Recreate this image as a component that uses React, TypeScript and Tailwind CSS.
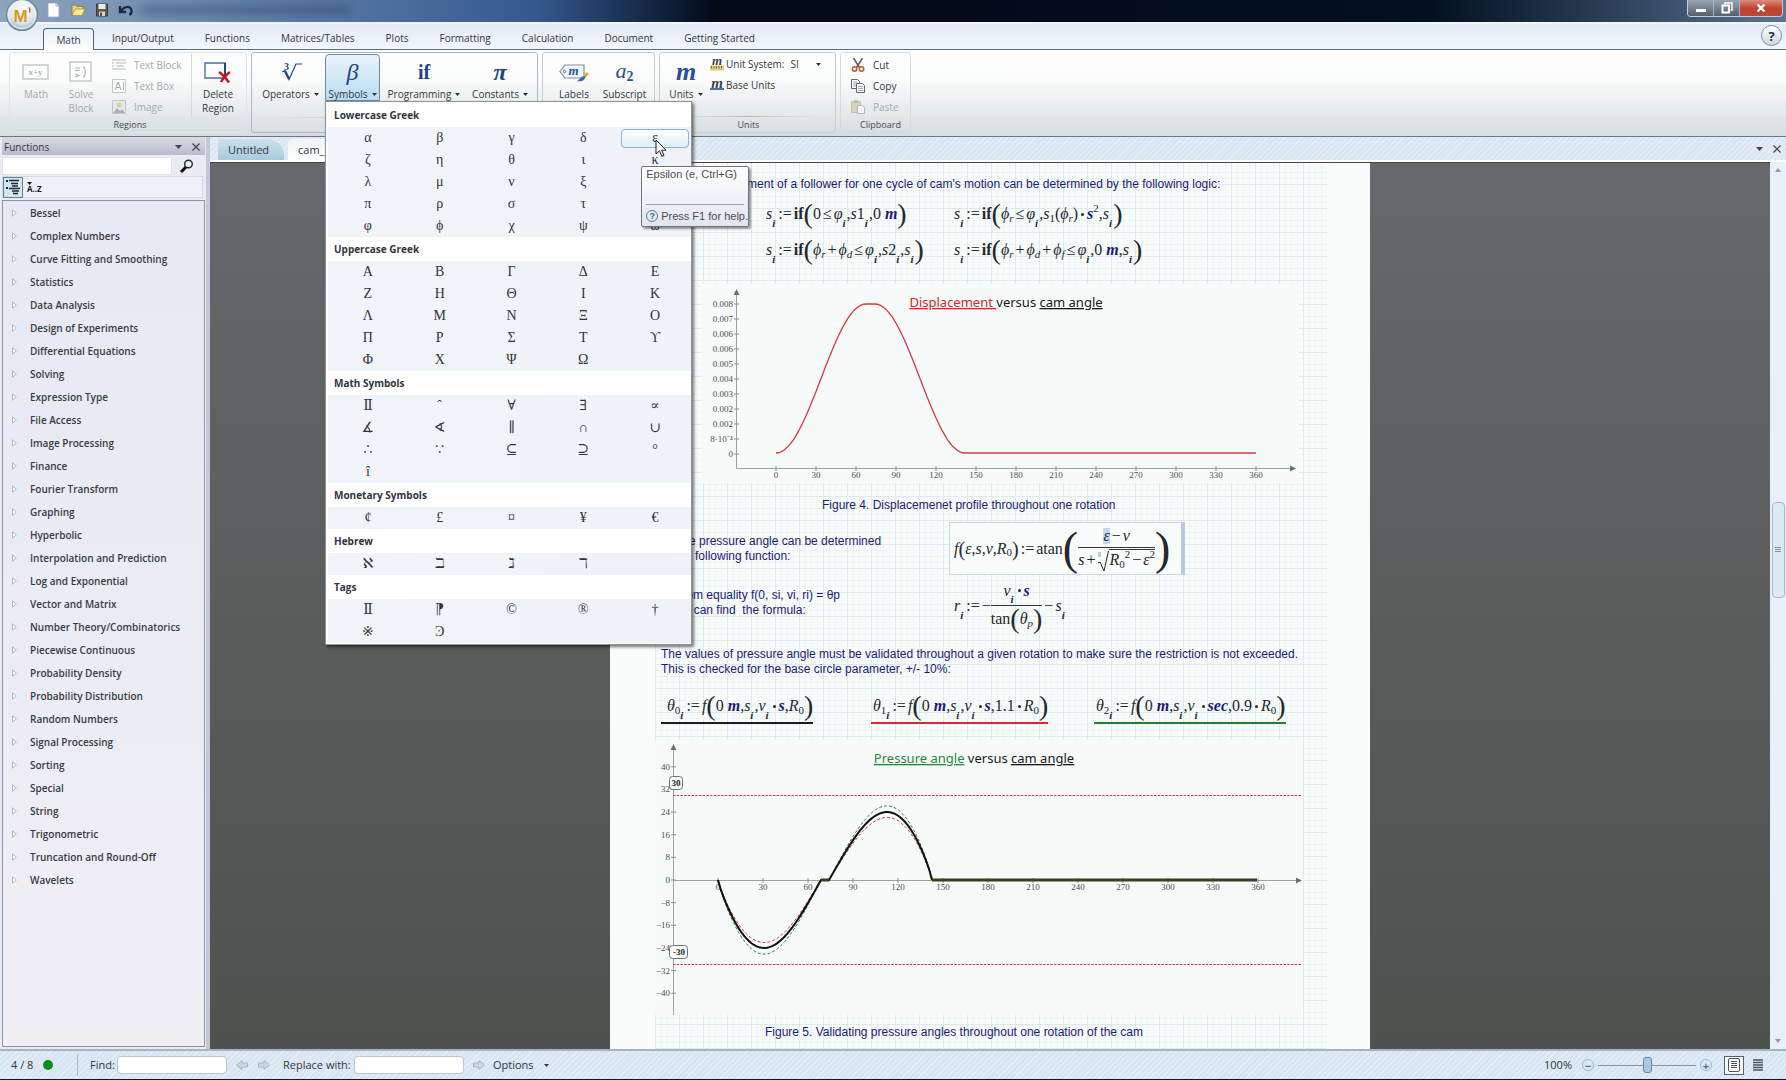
import * as React from "react"
import clsx from "clsx"

const tabs = ["Input/Output", "Functions", "Matrices/Tables", "Plots", "Formatting", "Calculation", "Document", "Getting Started"]

const categories = [
  "Bessel", "Complex Numbers", "Curve Fitting and Smoothing", "Statistics", "Data Analysis",
  "Design of Experiments", "Differential Equations", "Solving", "Expression Type", "File Access",
  "Image Processing", "Finance", "Fourier Transform", "Graphing", "Hyperbolic",
  "Interpolation and Prediction", "Log and Exponential", "Vector and Matrix",
  "Number Theory/Combinatorics", "Piecewise Continuous", "Probability Density",
  "Probability Distribution", "Random Numbers", "Signal Processing", "Sorting", "Special",
  "String", "Trigonometric", "Truncation and Round-Off", "Wavelets",
]

const symbolGroups = [
  { title: "Lowercase Greek", symbols: "α β γ δ ε ζ η θ ι κ λ μ ν ξ ο π ρ σ τ υ φ ϕ χ ψ ω".split(" ") },
  { title: "Uppercase Greek", symbols: "Α Β Γ Δ Ε Ζ Η Θ Ι Κ Λ Μ Ν Ξ Ο Π Ρ Σ Τ ϒ Φ Χ Ψ Ω".split(" ") },
  { title: "Math Symbols", symbols: "Ⅱ ˆ ∀ ∃ ∝ ∡ ∢ ∥ ∩ ∪ ∴ ∵ ⊆ ⊇ ° î".split(" ") },
  { title: "Monetary Symbols", symbols: "¢ £ ¤ ¥ €".split(" ") },
  { title: "Hebrew", symbols: "ℵ ℶ ℷ ℸ".split(" ") },
  { title: "Tags", symbols: "Ⅱ ⁋ © ® † ※ Ͽ".split(" ") },
]

export default function App() {
  return (
    <div className="flex h-screen flex-col overflow-hidden bg-[#dbe7f2] font-['Open_Sans',sans-serif] text-[10px] leading-[14px] text-[#33373d]">
      <TitleBar />
      <RibbonTabs />
      <Ribbon />
      <main className="flex min-h-0 flex-1">
        <FunctionsPanel />
        <DocumentArea />
      </main>
      <StatusBar />
    </div>
  )
}

function TitleBar() {
  return (
    <header className="relative flex h-[22px] shrink-0 items-start justify-between bg-[#020a18]">
      <div className="absolute inset-0 bg-linear-to-r from-[#8ea5bf] via-[#35598f] via-30% to-transparent to-40%" />
      <div className="absolute inset-y-0 right-0 w-1/2 bg-linear-to-r from-[#020a18] via-[#04101f] via-60% to-[#5b7593]" />
      <div className="relative flex items-center gap-2 pt-0.5 pl-[46px]">
        <button aria-label="New" className="size-4">
          <svg viewBox="0 0 16 16"><path d="M2 1h8l3 3v11H2z" fill="#fff" stroke="#9aa5b3" strokeWidth=".8" /><path d="M10 1v3h3" fill="#dde4ec" stroke="#9aa5b3" strokeWidth=".8" /></svg>
        </button>
        <button aria-label="Open" className="size-4">
          <svg viewBox="0 0 16 16"><path d="M2 13V3h4l1 1.500h6V7" fill="#e9d27a" stroke="#8a7430" strokeWidth=".8" /><path d="M2 13.500 5 7h10l-3 6.500z" fill="#f8ec9c" stroke="#a98f38" strokeWidth=".8" /></svg>
        </button>
        <button aria-label="Save" className="size-4">
          <svg viewBox="0 0 16 16"><path d="M2.500 2h11v12h-11z" fill="#5a5754" stroke="#3c3a3a" /><path d="M4.500 2h7v5h-7z" fill="#ecebe6" /><path d="M5 9.500h6V14H5z" fill="#d8d4c8" /><path d="M6 10.500h2V14H6z" fill="#4a4744" /></svg>
        </button>
        <button aria-label="Undo" className="size-4">
          <svg viewBox="0 0 16 16"><path d="M2 4v6h6" fill="none" stroke="#1c2a40" strokeWidth="2.400" /><path d="M2.500 9.500C6 4 12 3.500 13.500 8c.5 2-.5 4-2 5" fill="none" stroke="#1c2a40" strokeWidth="2.200" /></svg>
        </button>
      </div>
      <div className="absolute top-1.5 left-[140px] h-2 w-[210px] rounded-full bg-[#1f3354]/40 blur-[5px]" />
      <div className="relative mr-[3px] flex h-[17px] overflow-hidden rounded-b border border-t-0 border-[#c3ccd6]">
        <button aria-label="Minimize" className="flex w-[26px] items-center justify-center border-r border-[#aab4c0] bg-linear-to-b from-[#9aa5b1] to-[#56606d]">
          <span className="mt-1 h-[3px] w-2.5 bg-white" />
        </button>
        <button aria-label="Restore" className="flex w-[26px] items-center justify-center border-r border-[#aab4c0] bg-linear-to-b from-[#9aa5b1] to-[#56606d]">
          <svg className="size-3" viewBox="0 0 12 12"><path d="M4 2.500V1h7v7H9.500" fill="none" stroke="#fff" strokeWidth="1.500" /><path d="M1.500 3.500h6.500v7H1.500z" fill="none" stroke="#fff" strokeWidth="2" /></svg>
        </button>
        <button aria-label="Close" className="flex w-[42px] items-center justify-center bg-linear-to-b from-[#d98d80] via-[#c2412d] via-50% to-[#b84a37]">
          <svg className="size-2.5" viewBox="0 0 10 10"><path d="M1.500 1.500l7 7m0-7l-7 7" stroke="#fff" strokeWidth="2.400" /></svg>
        </button>
      </div>
      <button aria-label="Application menu" className="absolute -top-0.5 left-[5px] z-20 size-[34px]">
        <svg viewBox="0 0 34 34">
          <defs>
            <radialGradient id="orb" cx=".5" cy=".35" r=".7">
              <stop offset="0" stopColor="#fff" />
              <stop offset=".6" stopColor="#dbe6ef" />
              <stop offset="1" stopColor="#7f97ae" />
            </radialGradient>
          </defs>
          <circle cx="17" cy="17" r="15.500" fill="url(#orb)" stroke="#6d8296" strokeWidth="1.200" />
          <circle cx="17" cy="17" r="13.500" fill="none" stroke="#f5fafd" />
          <text x="15.500" y="24" textAnchor="middle" fontFamily="Liberation Sans" fontWeight="700" fontSize="17" fill="#dc9a1c">M</text>
          <path d="M24 9.500l1 2-.5 3" fill="none" stroke="#c8702a" strokeWidth="1.600" />
        </svg>
      </button>
    </header>
  )
}

function RibbonTabs() {
  return (
    <nav className="flex h-7 shrink-0 items-end justify-between border-t-2 border-b border-t-[#eef4fa] border-b-[#5f7180] bg-linear-to-b from-[#e3eaf2] to-[#f0f8ff] pl-[43px] shadow-[0_-1px_0_#50647c]">
      <div className="flex items-end">
        <a href="#math" className="-mb-px flex h-[22px] w-[51px] items-center justify-center rounded-t border border-b-0 border-[#4f6475] bg-linear-to-b from-[#e6f2f8] to-white">Math</a>
        <div className="flex h-[22px] items-center gap-[31px] pl-[18px]">
          {tabs.map((tab) => (
            <a key={tab} href="#ribbon" className="whitespace-nowrap">{tab}</a>
          ))}
        </div>
      </div>
      <button aria-label="Help" className="mr-1 mb-[3px] flex size-[21px] items-center justify-center rounded-full border border-[#7b8b99] bg-linear-to-b from-white to-[#ccd9e4] text-[13px] font-bold text-[#27313b]">?</button>
    </nav>
  )
}

function Ribbon() {
  return (
    <section className="relative z-10 flex h-[87px] shrink-0 gap-1 border-b border-[#66788a] bg-linear-to-b from-white via-[#fafbfb] via-35% to-[#d5dddf] pt-0.5 pb-[3px] pl-[9px]">
      <RibbonGroup title="Regions" className="w-[238px] border-[#dfe4e7] pl-1">
        <BigButton label="Math" className="w-11" muted icon={<MathRegionIcon />} />
        <BigButton label="Solve Block" className="w-[46px] px-1" muted icon={<SolveIcon />} />
        <div className="flex w-[88px] shrink-0 flex-col border-r border-[#d5dadd] pl-2 text-[#a5a9ac]">
          <SmallButton label="Text Block" icon={<TextBlockIcon />} />
          <SmallButton label="Text Box" icon={<TextBoxIcon />} />
          <SmallButton label="Image" icon={<ImageIcon />} />
        </div>
        <BigButton label="Delete Region" className="w-[52px] px-2" icon={<DeleteRegionIcon />} />
      </RibbonGroup>

      <RibbonGroup className="w-[287px] border-[#a9bac6] pl-1">
        <BigButton label="Operators" caret className="w-[69px]" icon={<RootIcon />} />
        <div className="relative self-start">
          <button className="flex h-[47px] w-[55px] flex-col items-center rounded-t-sm border border-[#6d8aa3] bg-linear-to-b from-[#e9f4fc] to-[#b9dcf3] pt-[3px]">
            <span className="flex h-[27px] items-center font-['Liberation_Serif',serif] text-2xl text-[#24428c] italic">β</span>
            <span className="mt-0.5 flex items-center gap-1">Symbols <Caret /></span>
          </button>
          <SymbolsMenu />
        </div>
        <BigButton label="Programming" caret className="w-[88px]" icon={<span className="font-['Liberation_Serif',serif] text-xl font-bold text-[#24428c]">if</span>} />
        <BigButton label="Constants" caret className="w-[64px]" icon={<span className="font-['Liberation_Serif',serif] text-2xl font-bold text-[#24428c] italic">π</span>} />
      </RibbonGroup>

      <RibbonGroup className="w-[113px] border-[#c3ced6] pl-1.5">
        <BigButton label="Labels" className="w-[50px]" icon={<LabelIcon />} />
        <BigButton label="Subscript" className="w-[51px]" icon={<span className="font-['Liberation_Serif',serif] text-[22px] text-[#2c4f9c] italic">a<sub className="text-sm font-bold not-italic">2</sub></span>} />
      </RibbonGroup>

      <RibbonGroup title="Units" className="w-[177px] border-[#c3ced6] pl-0.5">
        <BigButton label="Units" caret className="w-12" icon={<span className="font-['Liberation_Serif',serif] text-[26px] font-bold text-[#2c4f9c] italic">m</span>} />
        <div className="flex flex-col">
          <label className="flex h-5 items-center gap-0.5">
            <RulerIcon />
            Unit System:
            <select className="ml-1 w-6 appearance-none outline-none" defaultValue="SI">
              <option>SI</option>
            </select>
            <Caret />
          </label>
          <SmallButton label="Base Units" tight icon={<span className="w-3.5 border-b-2 border-[#54709f] text-center font-['Liberation_Serif',serif] text-[15px] leading-[9px] font-bold text-[#3a4250] italic">m</span>} />
        </div>
      </RibbonGroup>

      <RibbonGroup title="Clipboard" className="w-[71px] border-[#d3dbe0] pl-2.5">
        <div className="flex flex-col">
          <SmallButton label="Cut" icon={<CutIcon />} />
          <SmallButton label="Copy" icon={<CopyIcon />} />
          <SmallButton label="Paste" muted icon={<PasteIcon />} />
        </div>
      </RibbonGroup>
    </section>
  )
}

function RibbonGroup({ title, className, children }: { title?: string; className: string; children: React.ReactNode }) {
  return (
    <div className={clsx("flex shrink-0 flex-col rounded-[3px] border", className)}>
      <div className="flex h-16 pt-px">{children}</div>
      <div className="mx-4 h-px bg-linear-to-r from-transparent via-[#b4bcc1] to-transparent" />
      {title && <div className="text-center text-[9px] leading-[15px] text-[#43484d]">{title}</div>}
    </div>
  )
}

function BigButton({ label, icon, className, muted, caret }: { label: string; icon: React.ReactNode; className: string; muted?: boolean; caret?: boolean }) {
  return (
    <button className={clsx("flex shrink-0 flex-col items-center pt-1", muted && "text-[#a5a9ac]", className)}>
      <span className="flex h-[27px] items-center leading-none">{icon}</span>
      <span className="mt-0.5 flex items-center gap-1">{label} {caret && <Caret />}</span>
    </button>
  )
}

function SmallButton({ label, icon, muted, tight }: { label: string; icon: React.ReactNode; muted?: boolean; tight?: boolean }) {
  return (
    <button className={clsx("flex h-[21px] items-center whitespace-nowrap", tight ? "gap-0.5" : "gap-2", muted && "text-[#a5a9ac]")}>
      {icon}
      {label}
    </button>
  )
}

function Caret() {
  return <svg className="h-[3px] w-[5px] shrink-0" viewBox="0 0 5 3"><path d="M0 0h5L2.500 3z" fill="#2f353b" /></svg>
}

function MathRegionIcon() {
  return (
    <svg className="h-[18px] w-7" viewBox="0 0 28 18">
      <path d="M1 2h25v14H1z" fill="#fff" stroke="#c5c9cd" strokeWidth="1.500" />
      <text x="13.500" y="12" textAnchor="middle" fontFamily="Liberation Serif" fontWeight="700" fontSize="9" fill="#a8b0bb">x+y</text>
    </svg>
  )
}

function SolveIcon() {
  return (
    <svg className="h-[22px] w-6" viewBox="0 0 24 22">
      <path d="M1 1h21v19H1z" fill="#fff" stroke="#c5c9cd" strokeWidth="1.500" />
      <path d="M6 7h5M6 9.500h5M6 13l4 1.500-4 1.500M14 6c3 0 3 10 0 10" fill="none" stroke="#a8b0bb" strokeWidth="1.200" />
    </svg>
  )
}

function TextBlockIcon() {
  return (
    <svg className="size-3.5" viewBox="0 0 14 14">
      <path d="M0 2h14M4 5h10M4 8h8M0 11h14" stroke="#b5babd" strokeWidth="1.200" />
      <path d="M0 5h2M0 8h2" stroke="#b5babd" strokeWidth="1.200" />
    </svg>
  )
}

function TextBoxIcon() {
  return (
    <svg className="size-3.5" viewBox="0 0 14 14">
      <path d="M.5.5h13v13H.5z" fill="#fff" stroke="#c0c5c9" />
      <text x="6" y="11" textAnchor="middle" fontFamily="Liberation Sans" fontSize="10" fill="#a0a5aa">A</text>
      <path d="M11.500 3v8" stroke="#b0b5ba" />
    </svg>
  )
}

function ImageIcon() {
  return (
    <svg className="size-3.5" viewBox="0 0 14 14">
      <path d="M.5.5h13v13H.5z" fill="#e6e9eb" stroke="#c0c5c9" />
      <circle cx="7" cy="5" r="2.500" fill="#d9cf9e" />
      <path d="M1 13l4-5 3 3 2-2 3 4z" fill="#a9b3b5" />
    </svg>
  )
}

function DeleteRegionIcon() {
  return (
    <svg className="h-6 w-7" viewBox="0 0 28 24">
      <path d="M1 3h20v15H1z" fill="#fff" stroke="#4a6fae" strokeWidth="1.400" />
      <path d="M21 3v15" stroke="#27477f" strokeWidth="2" />
      <path d="M15 12c3 2 7 6 10 10.500M26 12c-4 3-7 6-9 10" fill="none" stroke="#c2161c" strokeWidth="2.400" />
    </svg>
  )
}

function RootIcon() {
  return (
    <svg className="h-6 w-6" viewBox="0 0 24 24">
      <path d="M3 12l3-1.500 4 9L17 4h6" fill="none" stroke="#24428c" strokeWidth="1.200" />
      <path d="M6 11l4 8" stroke="#24428c" strokeWidth="2.400" />
      <text x="5" y="10" fontFamily="Liberation Serif" fontWeight="700" fontSize="10" fill="#24428c">3</text>
    </svg>
  )
}

function LabelIcon() {
  return (
    <svg className="h-6 w-8" viewBox="0 0 32 24">
      <path d="M7 5h19v13H7l-5-6.500z" fill="#f2f7fb" stroke="#7e8fa0" strokeWidth="1.200" />
      <circle cx="6.500" cy="11.500" r="1.200" fill="none" stroke="#5d6d7e" />
      <text x="15.500" y="15" textAnchor="middle" fontFamily="Liberation Serif" fontStyle="italic" fontWeight="700" fontSize="13" fill="#2c4f9c">m</text>
      <path d="M30 13l-4 4" stroke="#e0a93a" strokeWidth="3" />
      <path d="M27 16c1 4-3 6-8 5 3-1 3-5 8-5z" fill="#3a68b4" />
    </svg>
  )
}

function RulerIcon() {
  return (
    <svg className="size-3.5" viewBox="0 0 14 14">
      <text x="7" y="7.500" textAnchor="middle" fontFamily="Liberation Serif" fontStyle="italic" fontWeight="700" fontSize="13" fill="#3a3f48">m</text>
      <path d="M0 8.500h14v5H0z" fill="#e5cd79" />
      <path d="M1.500 9v2.500M4 9v2.500M6.500 9v2.500M9 9v2.500M11.500 9v2.500" stroke="#6f5f2d" strokeWidth=".9" />
    </svg>
  )
}

function CutIcon() {
  return (
    <svg className="size-3.5" viewBox="0 0 14 14">
      <path d="M2.500 0l6 9.500M11.500 0l-6 9.500" stroke="#5c5f63" strokeWidth="1.600" />
      <circle cx="3.500" cy="11" r="2.200" fill="none" stroke="#b5602f" strokeWidth="1.600" />
      <circle cx="10.500" cy="11" r="2.200" fill="none" stroke="#b5602f" strokeWidth="1.600" />
    </svg>
  )
}

function CopyIcon() {
  return (
    <svg className="size-3.5" viewBox="0 0 14 14">
      <path d="M.5.5h6l2 2v7h-8z" fill="#fff" stroke="#63686e" />
      <path d="M2 3h4M2 5h4M2 7h3" stroke="#8a9097" strokeWidth=".8" />
      <path d="M5.500 4.500h6l2 2v7h-8z" fill="#fff" stroke="#63686e" />
      <path d="M7 7.500h5M7 9.500h5M7 11.500h5" stroke="#8a9097" strokeWidth=".8" />
    </svg>
  )
}

function PasteIcon() {
  return (
    <svg className="size-3.5" viewBox="0 0 14 14">
      <path d="M.5 1.500h9v11h-9z" fill="#d9d6b8" stroke="#c3c1a8" />
      <path d="M3 0h4v3H3z" fill="#b9bcbd" />
      <path d="M6.500 5.500h5l2 2v6h-7z" fill="#f5f6f6" stroke="#b4b8bb" />
    </svg>
  )
}

function SymbolsMenu() {
  return (
    <div className="absolute top-full left-0 w-[367px] border border-[#8d9399] bg-white py-px pl-1.5 shadow-[2px_2px_3px_#00000088]">
      {symbolGroups.map((group) => (
        <section key={group.title}>
          <h3 className="h-6 pl-0.5 leading-6 font-bold text-[#30353c]">{group.title}</h3>
          <div className="-ml-1 grid grid-cols-5 bg-linear-to-r from-[#f1f4f8] to-[#eff3f9] pl-1 font-['Liberation_Serif','DejaVu_Serif','DejaVu_Sans',serif] text-sm leading-none text-[#2f343a]">
            {group.symbols.map((symbol, i) => (
              <div key={i} className="relative flex h-[22px] items-center justify-center px-0.5">
                <button className={clsx("flex h-[19px] w-full items-center justify-center rounded-sm border", symbol === "ε" ? "border-[#8ab4d3] bg-linear-to-b from-white to-[#dff1fb]" : "border-transparent")}>
                  {symbol}
                </button>
                {symbol === "ε" && <SymbolTip />}
              </div>
            ))}
          </div>
        </section>
      ))}
    </div>
  )
}

function SymbolTip() {
  return (
    <>
      <svg className="absolute top-3 left-[36px] z-30 h-[19px] w-3" viewBox="0 0 12 19">
        <path d="M1 1v14l3.500-3.200 2.300 5.700 2.200-1-2.300-5.300H11z" fill="#fff" stroke="#1d2024" />
      </svg>
      <div role="tooltip" className="absolute top-[39px] left-[22px] z-20 h-[61px] w-[108px] rounded-xs border border-[#6f747a] bg-linear-to-b from-white to-[#e3e5ee] px-1 font-['Liberation_Sans',sans-serif] text-[11px] leading-[14px] whitespace-nowrap text-[#4a4d55] shadow-[2px_2px_2px_#00000066]">
        <p className="h-[38px] border-b border-[#9ba0aa]">Epsilon (e, Ctrl+G)</p>
        <p className="flex h-[21px] items-center gap-[3px]">
          <span className="flex size-3 shrink-0 items-center justify-center rounded-full border border-[#4d7fa5] text-[9px] font-bold text-[#2f6a97]">?</span>
          Press F1 for help.
        </p>
      </div>
    </>
  )
}

function FunctionsPanel() {
  return (
    <aside className="flex w-[210px] shrink-0 flex-col border-r-4 border-[#c3c8d6] bg-[#e9ecf4] pr-px pl-0.5">
      <div className="flex h-[18px] shrink-0 items-center justify-between bg-linear-to-b from-[#d9dce6] to-[#b9bccb] pt-0.5 pr-[5px] pl-0.5">
        <h2>Functions</h2>
        <div className="flex items-center gap-2.5">
          <button aria-label="Panel options"><svg className="h-1 w-[7px]" viewBox="0 0 7 4"><path d="M0 0h7L3.500 4z" fill="#3e434c" /></svg></button>
          <button aria-label="Close panel"><CloseIcon /></button>
        </div>
      </div>
      <div className="flex h-[21px] shrink-0 items-center gap-2">
        <input aria-label="Search functions" className="h-[18px] w-[170px] border border-[#dfe3ea] bg-white px-1 outline-none" />
        <button aria-label="Search">
          <svg className="size-3.5" viewBox="0 0 14 14"><circle cx="8.500" cy="5" r="3.800" fill="#e8eef3" stroke="#22272c" strokeWidth="1.400" /><path d="M6 8l-5 5" stroke="#111" strokeWidth="3" /></svg>
        </button>
      </div>
      <div className="mr-0.5 flex h-[22px] shrink-0 items-center gap-1 border border-[#d2d9e4] bg-[#edf2f8]">
        <button aria-label="Group by category" className="flex h-[21px] w-5 items-center justify-center border border-[#5d7f96] bg-[#d3e7f3]">
          <svg className="h-4 w-3.5" viewBox="0 0 14 16"><path d="M3 1.500h10M5 4.500h7M6 7h6M3 9.500h11M6 12h7M7 14.500h5" stroke="#22272c" strokeWidth="1.500" /><path d="M0 2h2M0 9h2" stroke="#22272c" strokeWidth="2" /></svg>
        </button>
        <button aria-label="Sort alphabetically" className="flex flex-col items-start">
          <svg className="h-[3px] w-[5px]" viewBox="0 0 5 3"><path d="M0 0h5L2.500 3z" fill="#111" /></svg>
          <span className="text-[8px] leading-[8px] font-bold text-[#15181b]">A..Z</span>
        </button>
      </div>
      <ul className="my-0.5 min-h-0 flex-1 overflow-hidden border border-[#8a93a0] bg-linear-to-b from-[#e6eaf3] to-[#f0eff4]">
        {categories.map((name) => (
          <li key={name}>
            <button className="flex h-[23px] items-center gap-[13px] pl-[9px] font-semibold whitespace-nowrap text-[#363b43]">
              <svg className="h-2 w-[5px]" viewBox="0 0 5 8"><path d="M.5.8v6.400L4.300 4z" fill="#fff" stroke="#a3aab4" strokeWidth=".8" /></svg>
              {name}
            </button>
          </li>
        ))}
      </ul>
    </aside>
  )
}

function CloseIcon() {
  return <svg className="size-2" viewBox="0 0 8 8"><path d="M.5.5l7 7m0-7l-7 7" stroke="#3e434c" strokeWidth="1.200" /></svg>
}

function DocumentArea() {
  return (
    <div className="flex min-w-0 flex-1 flex-col">
      <div className="flex h-[25px] shrink-0 items-end justify-between border-b-2 border-white bg-[#dbe7f2] bg-[repeating-linear-gradient(135deg,#ffffff55_0_1px,transparent_1px_4px)] pl-2">
        <div className="flex items-end gap-1">
          <button className="h-[21px] w-[66px] rounded-tl-sm rounded-tr-2xl bg-linear-to-b from-[#cbe2ee] to-[#a9cbdd] pl-2.5 text-left text-[11px]">Untitled</button>
          <button className="h-[21px] w-[92px] rounded-t-sm bg-linear-to-b from-[#eef4f9] to-white pl-2.5 text-left text-[11px]">cam_</button>
        </div>
        <div className="flex h-full items-center gap-2.5 pr-[5px]">
          <button aria-label="Tab list"><svg className="h-1 w-[7px]" viewBox="0 0 7 4"><path d="M0 0h7L3.500 4z" fill="#3e434c" /></svg></button>
          <button aria-label="Close document"><CloseIcon /></button>
        </div>
      </div>
      <div className="flex min-h-0 flex-1">
        <div className="flex flex-1 justify-center overflow-hidden border-t border-[#44474b] bg-linear-to-b from-[#67686b] to-[#4f514f]">
          <Worksheet />
        </div>
        <div className="flex w-4 flex-col items-center justify-between bg-[#e8f0fa] py-1.5">
          <svg className="h-1 w-1.5" viewBox="0 0 6 4"><path d="M0 4h6L3 0z" fill="#8b98a8" /></svg>
          <div className="flex h-24 w-[13px] flex-col items-center justify-center gap-px rounded-sm border border-[#a9b8c8] bg-[#dfe9f4] -translate-y-14">
            <span className="h-px w-1.5 bg-[#7e8fa3]" />
            <span className="h-px w-1.5 bg-[#7e8fa3]" />
            <span className="h-px w-1.5 bg-[#7e8fa3]" />
          </div>
          <svg className="h-1 w-1.5" viewBox="0 0 6 4"><path d="M0 0h6L3 4z" fill="#8b98a8" /></svg>
        </div>
      </div>
    </div>
  )
}

function Worksheet() {
  return (
    <article className="w-[760px] overflow-hidden bg-[#fafcfc] pr-[43px] pl-[45px]">
      <div className="h-full bg-[#f8fcfb] bg-[repeating-linear-gradient(90deg,#dcebed_0_1px,transparent_1px_24px),repeating-linear-gradient(0deg,#dcebed_0_1px,transparent_1px_24px),repeating-linear-gradient(90deg,#ebf5f5_0_1px,transparent_1px_6px),repeating-linear-gradient(0deg,#ebf5f5_0_1px,transparent_1px_6px)] pl-1.5 font-['Liberation_Sans',sans-serif] text-xs leading-[15px] whitespace-nowrap text-[#1a1a78]">
        <p className="ml-[18px] pt-3.5">The displacement of a follower for one cycle of cam's motion can be determined by the following logic:</p>

        <div className="mt-1 ml-[105px] grid grid-cols-[188px_auto]">
          <Formula><I>s</I><Idx>i</Idx><Op>:=</Op><b className="font-bold">if</b><Paren>(</Paren>0<Op>≤</Op><I>φ</I><Idx>i</Idx>,<I>s</I>1<Idx>i</Idx>,0 <Unit>m</Unit><Paren>)</Paren></Formula>
          <Formula><I>s</I><Idx>i</Idx><Op>:=</Op><b className="font-bold">if</b><Paren>(</Paren><I>ϕ</I><Sub>r</Sub><Op>≤</Op><I>φ</I><Idx>i</Idx>,<I>s</I><Sub upright>1</Sub>(<I>ϕ</I><Sub>r</Sub>)<Dot /><Unit>s</Unit><Sup>2</Sup>,<I>s</I><Idx>i</Idx><Paren>)</Paren></Formula>
          <Formula><I>s</I><Idx>i</Idx><Op>:=</Op><b className="font-bold">if</b><Paren>(</Paren><I>ϕ</I><Sub>r</Sub><Op>+</Op><I>ϕ</I><Sub>d</Sub><Op>≤</Op><I>φ</I><Idx>i</Idx>,<I>s</I>2<Idx>i</Idx>,<I>s</I><Idx>i</Idx><Paren>)</Paren></Formula>
          <Formula><I>s</I><Idx>i</Idx><Op>:=</Op><b className="font-bold">if</b><Paren>(</Paren><I>ϕ</I><Sub>r</Sub><Op>+</Op><I>ϕ</I><Sub>d</Sub><Op>+</Op><I>ϕ</I><Sub>f</Sub><Op>≤</Op><I>φ</I><Idx>i</Idx>,0 <Unit>m</Unit>,<I>s</I><Idx>i</Idx><Paren>)</Paren></Formula>
        </div>

        <DisplacementPlot />
        <p className="mt-[9px] ml-[161px]">Figure 4. Displacemenet profile throughout one rotation</p>

        <div className="mt-[9px] grid grid-cols-[288px_auto] items-start">
          <p className="pt-3 pl-3.5">The pressure angle can be determined<br />the following function:</p>
          <div className="flex h-[53px] w-[236px] items-center border border-r-4 border-[#c9d8e4] border-r-[#b4cbe2] bg-[#f8fcfb] pl-1">
            <Formula>
              <I>f</I><Paren small>(</Paren><I>ε</I>,<I>s</I>,<I>v</I>,<I>R</I><Sub upright>0</Sub><Paren small>)</Paren><Op>:=</Op>atan
              <Paren tall>(</Paren>
              <span className="flex flex-col items-center">
                <span className="flex h-[22px] w-full items-center justify-center border-b border-[#33373c]"><span className="bg-[#c2d8ee]"><I>ε</I></span><Op>−</Op><I>v</I></span>
                <span className="flex h-6 items-center">
                  <I>s</I><Op>+</Op>
                  <svg className="h-[22px] w-3 self-end" viewBox="0 0 12 22"><path d="M1 13l2-1 4 9L11.500 1" fill="none" stroke="#24282c" /><path d="M1 2h3v5H1z" fill="#c3c9cd" /></svg>
                  <span className="flex h-[21px] items-center border-t border-[#33373c]"><I>R</I><Sub upright>0</Sub><Sup>2</Sup><Op>−</Op><I>ε</I><Sup>2</Sup></span>
                </span>
              </span>
              <Paren tall>)</Paren>
            </Formula>
          </div>
        </div>

        <div className="grid h-[58px] grid-cols-[288px_auto] items-start">
          <p className="pt-[13px] pl-3.5">From equality f(0, si, vi, ri) = θp<br />we can find&nbsp; the formula:</p>
          <div className="flex h-[62px] items-center pl-[5px]">
            <Formula>
              <I>r</I><Idx>i</Idx><Op>:=</Op>−
              <span className="flex flex-col items-center">
                <span className="flex h-[26px] w-full items-center justify-center border-b border-[#33373c] pb-1"><I>v</I><Idx>i</Idx><Dot /><Unit>s</Unit></span>
                <span className="flex h-[26px] items-center">tan<Paren>(</Paren><I>θ</I><Sub>p</Sub><Paren>)</Paren></span>
              </span>
              <Op>−</Op><I>s</I><Idx>i</Idx>
            </Formula>
          </div>
        </div>

        <p className="mt-3.5">
          The values of pressure angle must be validated throughout a given rotation to make sure the restriction is not exceeded.
          <br />
          This is checked for the base circle parameter, +/- 10%:
        </p>

        <div className="mt-[11px] grid grid-cols-[210px_223px_auto] justify-items-start">
          <div className="h-9 border-b-2 border-[#1b1d1f] pl-1.5">
            <Formula><I>θ</I><Sub upright>0</Sub><Idx>i</Idx><Op>:=</Op><I>f</I><Paren>(</Paren>0 <Unit>m</Unit>,<I>s</I><Idx>i</Idx>,<I>v</I><Idx>i</Idx><Dot /><Unit>s</Unit>,<I>R</I><Sub upright>0</Sub><Paren>)</Paren></Formula>
          </div>
          <div className="h-9 border-b-2 border-[#d52b33] pl-0.5">
            <Formula><I>θ</I><Sub upright>1</Sub><Idx>i</Idx><Op>:=</Op><I>f</I><Paren>(</Paren>0 <Unit>m</Unit>,<I>s</I><Idx>i</Idx>,<I>v</I><Idx>i</Idx><Dot /><Unit>s</Unit>,1.1<Dot /><I>R</I><Sub upright>0</Sub><Paren>)</Paren></Formula>
          </div>
          <div className="h-9 border-b-2 border-[#2a7d32] pl-0.5">
            <Formula><I>θ</I><Sub upright>2</Sub><Idx>i</Idx><Op>:=</Op><I>f</I><Paren>(</Paren>0 <Unit>m</Unit>,<I>s</I><Idx>i</Idx>,<I>v</I><Idx>i</Idx><Dot /><Unit>sec</Unit>,0.9<Dot /><I>R</I><Sub upright>0</Sub><Paren>)</Paren></Formula>
          </div>
        </div>

        <PressurePlot />
        <p className="mt-1 ml-[104px]">Figure 5. Validating pressure angles throughout one rotation of the cam</p>
      </div>
    </article>
  )
}

/* Math notation pieces, all centred on the formula's middle line */

function Formula({ children }: { children: React.ReactNode }) {
  return <div className="flex h-9 items-center font-['Liberation_Serif',serif] text-base leading-none whitespace-pre text-[#24282c]">{children}</div>
}

function I({ children }: { children: React.ReactNode }) {
  return <i>{children}</i>
}

function Op({ children }: { children: React.ReactNode }) {
  return <span className="px-0.5">{children}</span>
}

function Sub({ children, upright }: { children: React.ReactNode; upright?: boolean }) {
  return <span className={clsx("pt-2 text-[11px]", !upright && "italic")}>{children}</span>
}

function Idx({ children }: { children: React.ReactNode }) {
  return <span className="pt-[18px] pr-px text-[11px] font-bold italic">{children}</span>
}

function Sup({ children }: { children: React.ReactNode }) {
  return <span className="pb-3 text-[11px]">{children}</span>
}

function Unit({ children }: { children: React.ReactNode }) {
  return <span className="font-bold text-[#1a1a78] italic">{children}</span>
}

function Dot() {
  return <span className="mx-[3px] size-[3px] rounded-full bg-[#24282c]" />
}

function Paren({ children, small, tall }: { children: React.ReactNode; small?: boolean; tall?: boolean }) {
  return <span className={clsx(tall ? "text-[46px]" : small ? "text-xl" : "text-[28px]")}>{children}</span>
}

const angles = [0, 30, 60, 90, 120, 150, 180, 210, 240, 270, 300, 330, 360]

function trace(from: number, to: number, y: (t: number) => number) {
  const steps = 40
  return Array.from({ length: steps + 1 }, (_, i) => `${from + ((to - from) * i) / steps},${y(i / steps)}`).join(" ")
}

function DisplacementPlot() {
  const labels = ["0.008", "0.007", "0.006", "0.006", "0.005", "0.004", "0.003", "0.002", "0.002", "8·10⁻⁴", "0"]
  const rise = trace(115, 205, (t) => 174 - 74.5 * (1 - Math.cos(Math.PI * t)))
  const fall = trace(214, 304, (t) => 174 - 74.5 * (1 + Math.cos(Math.PI * t)))
  return (
    <svg className="mt-[11px] h-[210px] w-[640px]" viewBox="0 0 640 210" fontFamily="Liberation Serif" fontSize="9" fill="#4a4f54">
      <path d="M40 5h598v199H40z" fill="#f6fbf9" />
      <path d="M75.500 14v175.500H630" fill="none" stroke="#9aa0a3" />
      <path d="M72.500 16l3-6 3 6zM629 186.500l6 3-6 3z" fill="#6a7073" />
      {labels.map((label, i) => (
        <g key={i}>
          <path d={`M73 ${25 + i * 15}h5`} stroke="#8a9093" />
          <text x="72" y={28 + i * 15} textAnchor="end">{label}</text>
        </g>
      ))}
      {angles.map((a, i) => (
        <g key={a}>
          <path d={`M${115 + i * 40} 187v5`} stroke="#8a9093" />
          <text x={115 + i * 40} y="199" textAnchor="middle">{a}</text>
        </g>
      ))}
      <polyline points={`${rise} ${fall} 595,174`} fill="none" stroke="#d43a42" strokeWidth="1.300" />
      <text x="345" y="28" textAnchor="middle" fontFamily="Noto Sans" fontSize="13" fill="#17191b" xmlSpace="preserve">
        <tspan fill="#e0212b" textDecoration="underline">Displacement </tspan>versus <tspan textDecoration="underline">cam angle</tspan>
      </text>
    </svg>
  )
}

function PressurePlot() {
  const values = [40, 32, 24, 16, 8, 0, -8, -16, -24, -32, -40]
  const curve = (scale: number) => {
    const dip = trace(63, 166, (t) => 144 + 68 * scale * Math.sin(Math.PI * Math.pow(t, 0.861)))
    const bump = trace(174, 277, (t) => 144 - 68 * scale * Math.sin(Math.PI * Math.pow(1 - t, 0.837)))
    return `${dip} ${bump}`
  }
  return (
    <svg className="mt-3 -ml-1.5 h-[285px] w-[650px]" viewBox="0 0 650 285" fontFamily="Liberation Serif" fontSize="9" fill="#4a4f54">
      <path d="M0 4h648v275H0z" fill="#f6fbf9" />
      <path d="M18.500 12v267M18 144.500h624" stroke="#9aa0a3" />
      <path d="M15.500 14l3-6 3 6zM641 141.500l6 3-6 3z" fill="#6a7073" />
      {values.map((v) => (
        <g key={v}>
          <path d={`M16 ${144 - v * 2.83}h5`} stroke="#8a9093" />
          <text x="15" y={147 - v * 2.83} textAnchor="end">{String(v).replace("-", "−")}</text>
        </g>
      ))}
      {angles.map((a, i) => (
        <g key={a}>
          <path d={`M${63 + i * 45} 142v5`} stroke="#8a9093" />
          <text x={63 + i * 45} y="154" textAnchor="middle">{a}</text>
        </g>
      ))}
      <path d="M18 59.500h628M18 228.500h628" stroke="#d8383f" strokeWidth="1.200" strokeDasharray="2.500 1.200" />
      <polyline points={curve(1.09)} fill="none" stroke="#2e7d3a" strokeDasharray="3 2" />
      <polyline points={curve(0.92)} fill="none" stroke="#c93a44" strokeDasharray="3 2" />
      <polyline points={curve(1)} fill="none" stroke="#111" strokeWidth="2" />
      <path d="M166 144h8M277 144h325" stroke="#37401f" strokeWidth="3.200" />
      <rect x="14.500" y="40.500" width="13" height="13" rx="3" fill="#f8fcfb" stroke="#6a7073" />
      <text x="21" y="50" textAnchor="middle" fontWeight="700" fill="#222">30</text>
      <rect x="14.500" y="209.500" width="18" height="13" rx="3" fill="#f8fcfb" stroke="#6a7073" />
      <text x="24" y="219" textAnchor="middle" fontWeight="700" fill="#222">-30</text>
      <text x="319" y="27" textAnchor="middle" fontFamily="Noto Sans" fontSize="13" fill="#17191b" xmlSpace="preserve">
        <tspan fill="#23893a" textDecoration="underline">Pressure angle</tspan> versus <tspan textDecoration="underline">cam angle</tspan>
      </text>
    </svg>
  )
}

function StatusBar() {
  return (
    <footer className="flex h-[31px] shrink-0 items-center justify-between border-t-2 border-b border-t-[#a8b3bd] border-b-[#0d1522] bg-[#d8e6f3] bg-[repeating-linear-gradient(135deg,#ffffff55_0_1px,transparent_1px_4px)] pr-[18px] pl-[11px] text-[11px]">
      <div className="flex items-center">
        <span className="w-8">4 / 8</span>
        <span className="size-2.5 rounded-full bg-[#0d8a1c]" />
        <span className="mr-3 ml-6 h-[22px] w-px bg-[#b0bcc8]" />
        <label htmlFor="find" className="w-[27px]">Find:</label>
        <input id="find" className="h-[18px] w-[110px] rounded-sm border border-[#b7c7d5] bg-white px-1 outline-none" />
        <button aria-label="Find previous" className="ml-[9px]"><ArrowIcon flip /></button>
        <button aria-label="Find next" className="ml-2.5"><ArrowIcon /></button>
        <label htmlFor="replace" className="ml-[13px] w-[71px]">Replace with:</label>
        <input id="replace" className="h-[18px] w-[110px] rounded-sm border border-[#b7c7d5] bg-white px-1 outline-none" />
        <button aria-label="Replace" className="ml-[9px]"><ArrowIcon /></button>
        <button className="ml-2 flex items-center gap-2.5">Options <Caret /></button>
      </div>
      <div className="flex items-center">
        <label htmlFor="zoom" className="mr-2.5">100%</label>
        <button aria-label="Zoom out" className="flex size-3 items-center justify-center rounded-full border border-[#9db8cd] text-[11px] leading-none font-bold text-[#54718a]">−</button>
        <input
          id="zoom"
          type="range"
          className="mx-1 h-4 w-[98px] appearance-none bg-[linear-gradient(#7f93a5,#7f93a5)] bg-size-[100%_1px] bg-center bg-no-repeat outline-none [&::-webkit-slider-thumb]:h-4 [&::-webkit-slider-thumb]:w-[9px] [&::-webkit-slider-thumb]:appearance-none [&::-webkit-slider-thumb]:rounded-[3px] [&::-webkit-slider-thumb]:border [&::-webkit-slider-thumb]:border-[#6787a0] [&::-webkit-slider-thumb]:bg-[#a9c9e2]"
        />
        <button aria-label="Zoom in" className="flex size-3 items-center justify-center rounded-full border border-[#9db8cd] text-[11px] leading-none font-bold text-[#54718a]">+</button>
        <button aria-label="Page view" className="ml-3 flex h-[19px] w-5 items-center justify-center border border-[#59636d] bg-[#f2f7fb]">
          <svg className="h-3.5 w-3" viewBox="0 0 12 14"><rect x=".5" y=".5" width="11" height="13" rx="1.500" fill="#fff" stroke="#4c535a" /><path d="M3 3.500h6M3 5.500h6M3 7.500h6M3 9.500h6" stroke="#4c535a" /></svg>
        </button>
        <button aria-label="Draft view" className="ml-1 flex h-[19px] w-5 items-center justify-center">
          <svg className="h-3 w-2.5" viewBox="0 0 10 12"><path d="M0 1h10M0 3.500h10M0 6h10M0 8.500h10M0 11h10" stroke="#4c535a" strokeWidth="1.300" /></svg>
        </button>
      </div>
    </footer>
  )
}

function ArrowIcon({ flip }: { flip?: boolean }) {
  return (
    <svg className={clsx("h-2.5 w-3", flip && "-scale-x-100")} viewBox="0 0 12 10">
      <path d="M.5 3h5.500V.5L11.500 5 6 9.500V7H.5z" fill="#cdd6de" stroke="#aab6c1" />
    </svg>
  )
}
